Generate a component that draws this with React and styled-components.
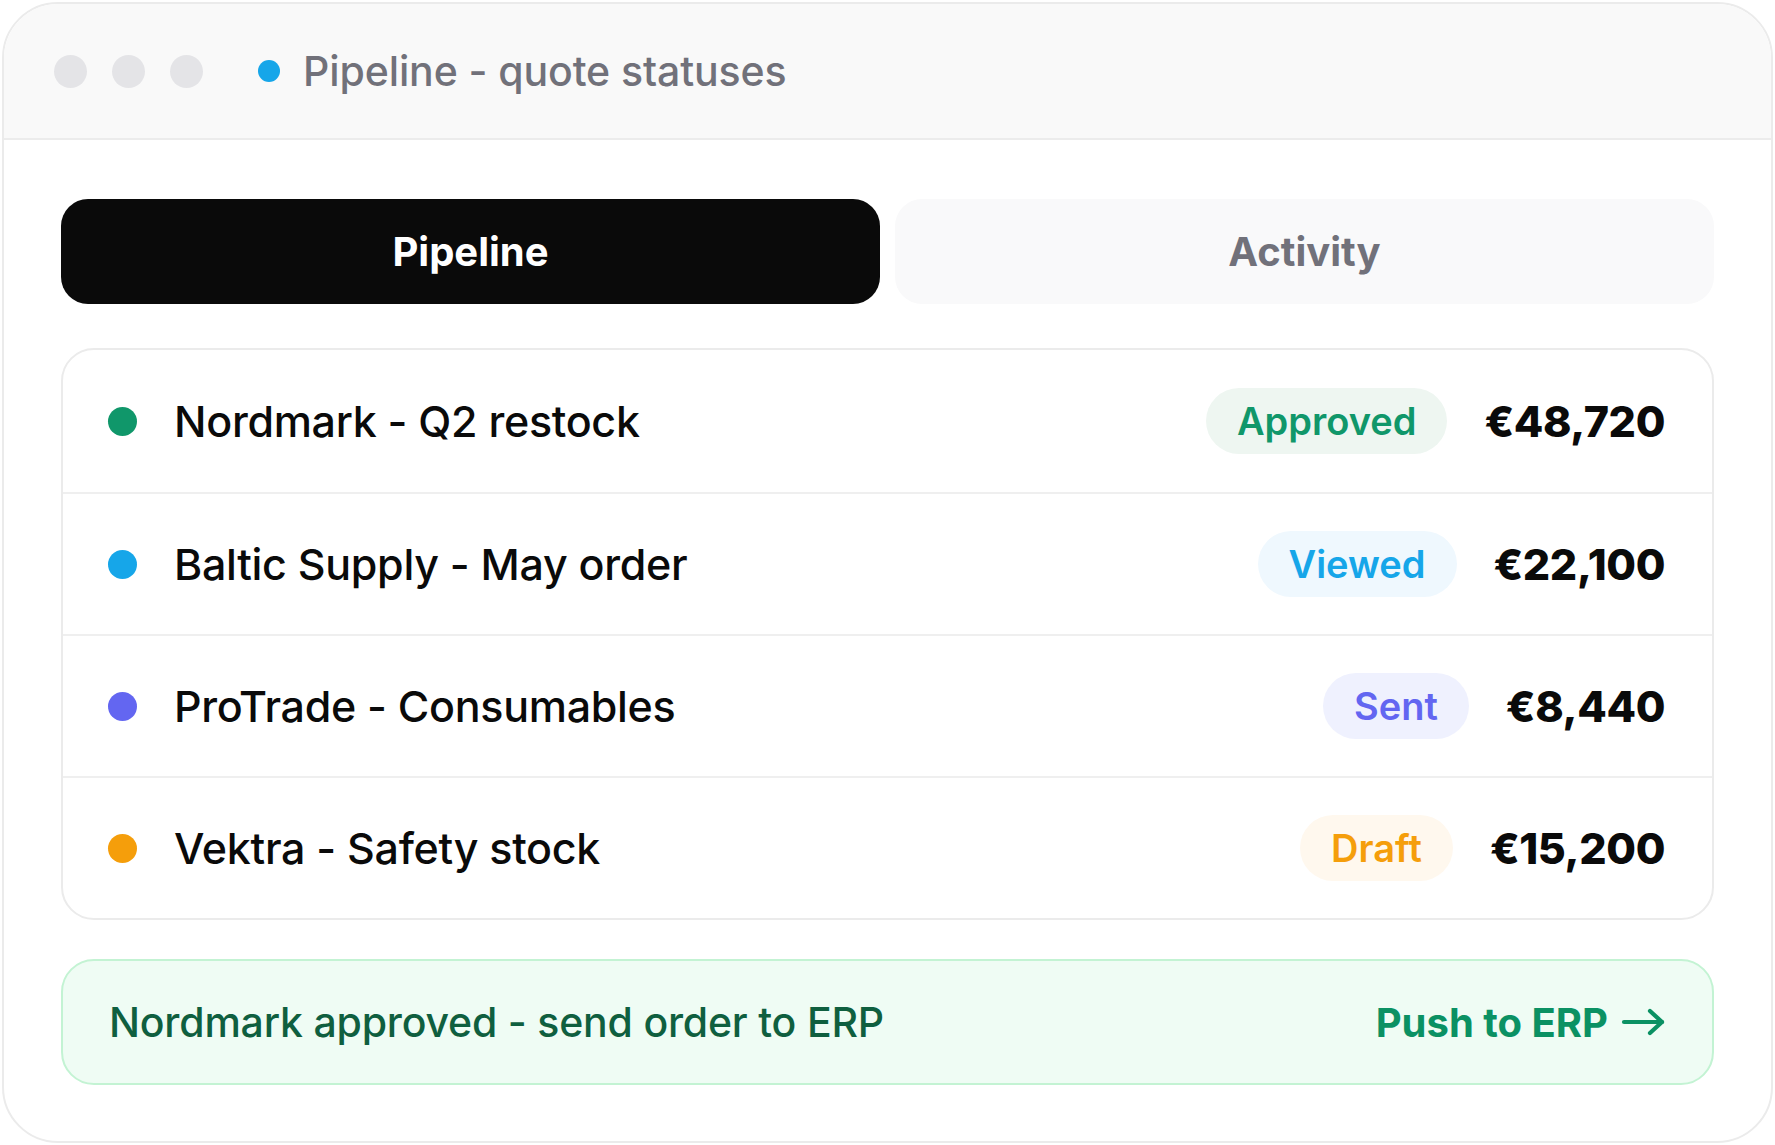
import React from 'react'
import styled, { createGlobalStyle } from 'styled-components'

const GlobalStyle = createGlobalStyle`
	* {
		box-sizing: border-box;
	}
	body {
		margin: 0;
		background: #fff;
		font-family: Inter, 'Noto Sans', 'Liberation Sans', sans-serif;
	}
`

const Window = styled.div`
	margin: 2px;
	height: 1141px;
	border: 2px solid #ebebeb;
	border-radius: 56px;
	background: #fff;
	overflow: hidden;
	display: flex;
	flex-direction: column;
`

const TitleBar = styled.div`
	height: 136px;
	flex-shrink: 0;
	background: #f9f9f9;
	border-bottom: 2px solid #ececec;
	display: flex;
	align-items: center;
	padding-left: 50px;
`

const Lights = styled.div`
	display: flex;
	gap: 25px;
	margin-right: 55px;
`

const Light = styled.span`
	width: 33px;
	height: 33px;
	border-radius: 50%;
	background: #e4e4e7;
`

const Dot = styled.span`
	flex-shrink: 0;
	width: ${({ size }) => size}px;
	height: ${({ size }) => size}px;
	border-radius: 50%;
	background: ${({ color }) => color};
`

const Title = styled.h1`
	margin: 0 0 0 23px;
	font-size: 41px;
	font-weight: 500;
	color: #71717a;
	letter-spacing: -0.1px;
`

const Body = styled.div`
	flex: 1;
	padding: 59px 57px 0;
	display: flex;
	flex-direction: column;
`

const Tabs = styled.div`
	display: grid;
	grid-template-columns: 1fr 1fr;
	gap: 15px;
	margin-bottom: 44px;
`

const Tab = styled.button`
	height: 105px;
	border: none;
	border-radius: 27px;
	font-family: inherit;
	font-size: 40px;
	font-weight: 700;
	background: ${({ active }) => (active ? '#0a0a0a' : '#f9f9fa')};
	color: ${({ active }) => (active ? '#fff' : '#71717a')};
	cursor: pointer;
`

const List = styled.div`
	border: 2px solid #ebebeb;
	border-radius: 33px;
	overflow: hidden;
	margin-bottom: 39px;
`

const Row = styled.div`
	height: 142px;
	display: flex;
	align-items: center;
	padding: 0 47px 0 45px;
	border-top: ${({ first }) => (first ? 'none' : '2px solid #efefef')};
`

const Name = styled.span`
	flex: 1;
	margin-left: 37px;
	font-size: 43px;
	font-weight: 500;
	color: #0a0a0a;
	letter-spacing: -0.3px;
`

const Pill = styled.span`
	height: 66px;
	padding: 0 31px;
	border-radius: 33px;
	display: inline-flex;
	align-items: center;
	font-size: 38px;
	font-weight: 600;
	background: ${({ bg }) => bg};
	color: ${({ fg }) => fg};
`

const Amount = styled.span`
	margin-left: 37px;
	font-size: 43px;
	font-weight: 800;
	color: #0a0a0a;
	letter-spacing: -0.4px;
`

const Banner = styled.div`
	height: 126px;
	border: 2px solid #c3f3d3;
	border-radius: 33px;
	background: #effcf4;
	display: flex;
	align-items: center;
	justify-content: space-between;
	padding: 0 47px 0 46px;
`

const BannerText = styled.span`
	font-size: 41px;
	font-weight: 500;
	color: #0f5f3f;
	letter-spacing: -0.2px;
`

const PushLink = styled.a`
	display: flex;
	align-items: center;
	gap: 13px;
	font-size: 40px;
	font-weight: 700;
	color: #0b9163;
	text-decoration: none;
	cursor: pointer;
`

const quotes = [
	{ name: 'Nordmark - Q2 restock', status: 'Approved', amount: '€48,720', dot: '#10976a', bg: '#eef6f1', fg: '#10976a' },
	{ name: 'Baltic Supply - May order', status: 'Viewed', amount: '€22,100', dot: '#16a6e9', bg: '#eff8fe', fg: '#16a6e9' },
	{ name: 'ProTrade - Consumables', status: 'Sent', amount: '€8,440', dot: '#6366f1', bg: '#eff1fe', fg: '#6366f1' },
	{ name: 'Vektra - Safety stock', status: 'Draft', amount: '€15,200', dot: '#f59e0b', bg: '#fff8ee', fg: '#f59e0b' },
]

const Arrow = () => (
	<svg width='44' height='28' viewBox='0 0 44 28' fill='none' stroke='currentColor' strokeWidth='4.2' strokeLinecap='round' strokeLinejoin='round'>
		<path d='M3 14h38' />
		<path d='M29 3l12 11-12 11' />
	</svg>
)

const App = () => {
	return (
		<>
			<GlobalStyle />
			<Window>
				<TitleBar>
					<Lights>
						<Light />
						<Light />
						<Light />
					</Lights>
					<Dot size={22} color='#16a6e9' />
					<Title>Pipeline - quote statuses</Title>
				</TitleBar>
				<Body>
					<Tabs>
						<Tab active>Pipeline</Tab>
						<Tab>Activity</Tab>
					</Tabs>
					<List>
						{quotes.map((q, index) => (
							<Row key={q.name} first={index === 0}>
								<Dot size={29} color={q.dot} />
								<Name>{q.name}</Name>
								<Pill bg={q.bg} fg={q.fg}>{q.status}</Pill>
								<Amount>{q.amount}</Amount>
							</Row>
						))}
					</List>
					<Banner>
						<BannerText>Nordmark approved - send order to ERP</BannerText>
						<PushLink>
							Push to ERP <Arrow />
						</PushLink>
					</Banner>
				</Body>
			</Window>
		</>
	)
}

export default App
